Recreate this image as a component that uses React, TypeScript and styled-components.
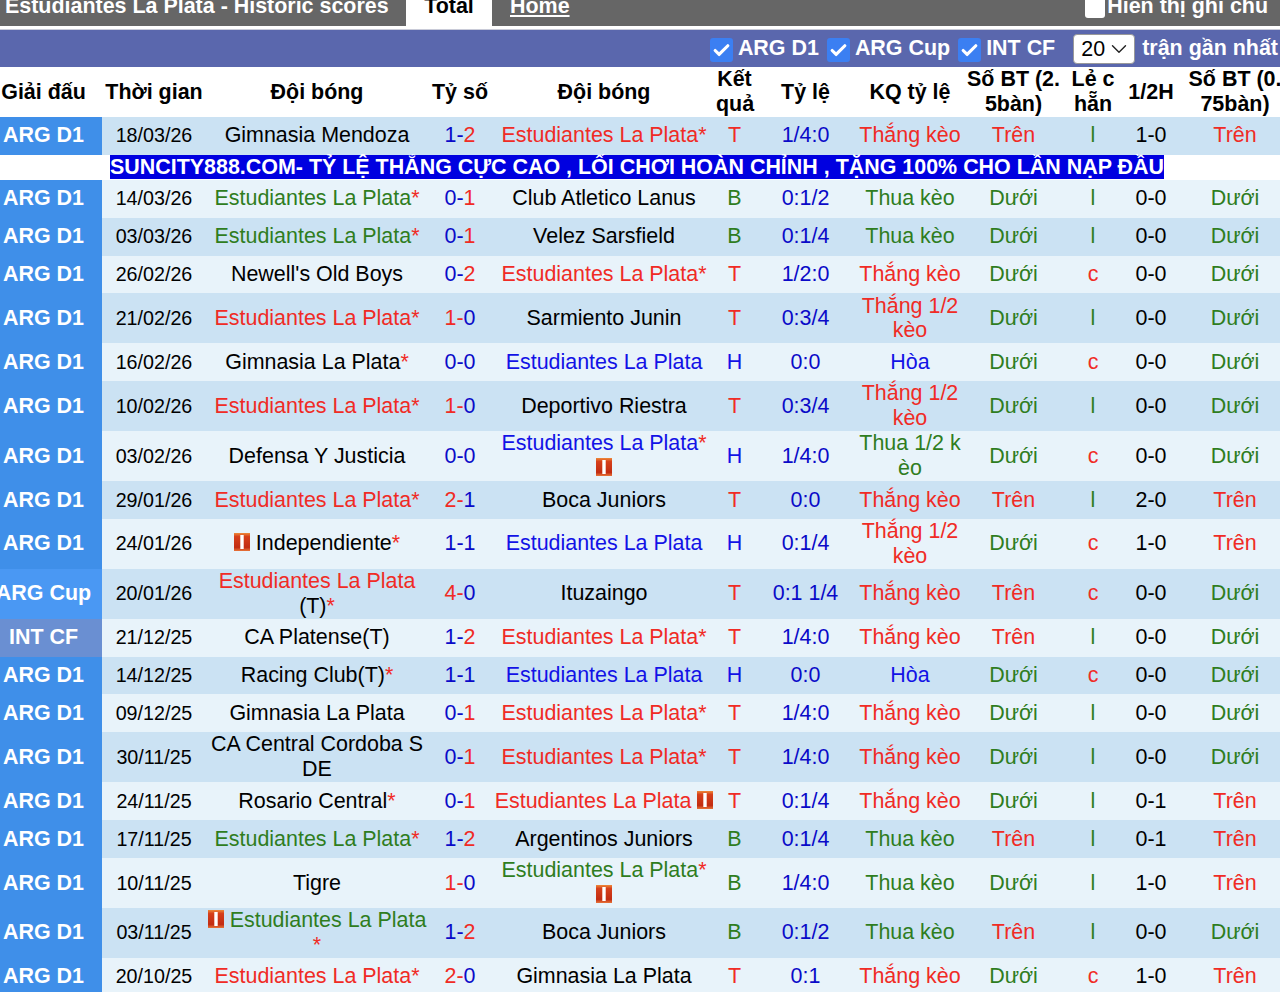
import React from "react";
import styled, { createGlobalStyle } from "styled-components";
import { Check, ChevronDown } from "lucide-react";

const RED = "#f02b25";
const GREEN = "#2f7d1e";
const BLUE = "#1212e6";
const SCORE_BLUE = "#0a0ac8";

const Global = createGlobalStyle`
  html, body { margin: 0; padding: 0; background: #fff; overflow: hidden; }
  body { font-family: "Liberation Sans", Arial, sans-serif; font-size: 21.45px; color: #000; }
`;

const Page = styled.div`
  width: 1280px;
  height: 992px;
  overflow: hidden;
`;

const TitleBar = styled.div`
  height: 26px;
  background: #666;
  display: flex;
  align-items: flex-end;
  padding-left: 5px;
  color: #fff;
  font-weight: 700;
  font-size: 21.45px;
  line-height: 24px;
  overflow: hidden;
`;

const TitleInner = styled.div`
  display: flex;
  width: 100%;
  height: 24px;
  margin-bottom: 8px;
  align-items: center;
`;

const TitleText = styled.span`
  width: 401px;
  flex: none;
`;

const ActiveTab = styled.span`
  width: 86px;
  flex: none;
  background: #fff;
  color: #000;
  text-align: center;
  height: 60px;
  line-height: 60px;
`;

const LinkTab = styled.a`
  margin-left: 18px;
  color: #fff;
  text-decoration: underline;
`;

const NoteToggle = styled.span`
  margin-left: auto;
  margin-right: 12px;
  display: flex;
  align-items: center;
  gap: 2px;
`;

const NoteBox = styled.span`
  width: 20px;
  height: 22px;
  margin-top: 1px;
  background: #fff;
  border-radius: 3px;
`;

const Rule = styled.div`
  height: 4px;
  background: linear-gradient(#fff 0 3px, #c9cbd8 3px);
`;

const FilterBar = styled.div`
  height: 37px;
  background: #5a67ad;
  display: flex;
  align-items: center;
  justify-content: flex-end;
  color: #fff;
  font-weight: 700;
  padding-right: 2px;
`;

const Filter = styled.label`
  display: flex;
  align-items: center;
  gap: 5px;
  margin-right: 8px;
`;

const CheckBox = styled.span`
  width: 23px;
  height: 24px;
  border-radius: 3px;
  background: #3b7ff2;
  display: flex;
  align-items: center;
  justify-content: center;
  margin-top: 3px;
`;

const SelectBox = styled.div`
  width: 62px;
  height: 30px;
  box-sizing: border-box;
  margin: 1px 7px 0 10px;
  background: #fff;
  border: 1px solid #999;
  border-radius: 4px;
  color: #000;
  font-weight: 400;
  display: flex;
  align-items: center;
  justify-content: space-between;
  padding: 0 2px 0 7px;
`;

const Table = styled.table`
  table-layout: fixed;
  width: 1304px;
  margin-left: -15px;
  border-collapse: collapse;
  border-spacing: 0;
  line-height: 24.9px;
  word-break: break-all;
`;

const Th = styled.th`
  height: 50px;
  padding: 0;
  font-weight: 700;
  text-align: center;

  &:nth-child(6) {
    word-break: normal;
  }

  &:last-child {
    padding: 0 3px;
  }
`;

const Tr = styled.tr<{ $dark: boolean; $tall?: boolean }>`
  height: ${(p) => (p.$tall ? "49.9px" : "37.9px")};
  background: ${(p) => (p.$dark ? "#cbe2f3" : "#e8f3fa")};
`;

const Td = styled.td<{ $color?: string }>`
  padding: 0;
  text-align: center;
  color: ${(p) => p.$color ?? "#000"};
`;

const DateCell = styled.td`
  padding: 0;
  text-align: center;
  font-size: 19.7px;
`;

const LeagueCell = styled.td<{ $bg: string }>`
  padding: 0;
  text-align: center;
  white-space: nowrap;
  color: #fff;
  font-weight: 700;
  background: ${(p) => p.$bg};
`;

const BannerRow = styled.tr`
  height: 24.6px;
  background: #fff;
`;

const BannerCell = styled.td`
  padding: 0;
  text-align: center;
  vertical-align: top;
  word-break: normal;
  white-space: nowrap;
`;

const BannerText = styled.span`
  display: inline-block;
  background: #0000e0;
  color: #fff;
  font-weight: 700;
  line-height: 24px;
  height: 24px;
`;

const Team = styled.span<{ $color: string }>`
  color: ${(p) => p.$color};
`;

const Suffix = styled.span`
  color: #000;
`;

const Star = styled.span`
  color: ${RED};
`;

const FlagSvg = styled.svg`
  width: 16px;
  height: 18px;
  vertical-align: -1px;
`;

const Flag = () => (
  <FlagSvg viewBox="0 0 16 18" aria-hidden="true">
    <defs>
      <linearGradient id="flagShade" x1="0" y1="0" x2="0" y2="1">
        <stop offset="0" stopColor="#ee8a3a" />
        <stop offset="0.2" stopColor="#d63f1a" />
        <stop offset="0.8" stopColor="#c22c12" />
        <stop offset="1" stopColor="#e8753a" />
      </linearGradient>
    </defs>
    <rect width="16" height="18" fill="url(#flagShade)" />
    <rect x="6.3" y="2" width="3.4" height="14" fill="#fff" />
  </FlagSvg>
);

type Side = {
  name: string;
  color?: string;
  star?: boolean;
  flag?: "before" | "after";
  suffix?: string;
};

type Row = {
  league: string;
  date: string;
  home: Side;
  score: [number, number];
  away: Side;
  res: "T" | "B" | "H";
  odds: string;
  kq: string;
  bt: "Trên" | "Dưới";
  lc: "l" | "c";
  half: string;
  bt75: "Trên" | "Dưới";
  tall?: boolean;
};

const ELP = "Estudiantes La Plata";
const e = (color: string, extra: Partial<Side> = {}): Side => ({ name: ELP, color, ...extra });
const t = (name: string, extra: Partial<Side> = {}): Side => ({ name, ...extra });

const rows: Row[] = [
  { league: "ARG D1", date: "18/03/26", home: t("Gimnasia Mendoza"), score: [1, 2], away: e(RED, { star: true }), res: "T", odds: "1/4:0", kq: "Thắng kèo", bt: "Trên", lc: "l", half: "1-0", bt75: "Trên" },
  { league: "ARG D1", date: "14/03/26", home: e(GREEN, { star: true }), score: [0, 1], away: t("Club Atletico Lanus"), res: "B", odds: "0:1/2", kq: "Thua kèo", bt: "Dưới", lc: "l", half: "0-0", bt75: "Dưới" },
  { league: "ARG D1", date: "03/03/26", home: e(GREEN, { star: true }), score: [0, 1], away: t("Velez Sarsfield"), res: "B", odds: "0:1/4", kq: "Thua kèo", bt: "Dưới", lc: "l", half: "0-0", bt75: "Dưới" },
  { league: "ARG D1", date: "26/02/26", home: t("Newell's Old Boys"), score: [0, 2], away: e(RED, { star: true }), res: "T", odds: "1/2:0", kq: "Thắng kèo", bt: "Dưới", lc: "c", half: "0-0", bt75: "Dưới" },
  { league: "ARG D1", date: "21/02/26", home: e(RED, { star: true }), score: [1, 0], away: t("Sarmiento Junin"), res: "T", odds: "0:3/4", kq: "Thắng 1/2 kèo", bt: "Dưới", lc: "l", half: "0-0", bt75: "Dưới", tall: true },
  { league: "ARG D1", date: "16/02/26", home: t("Gimnasia La Plata", { star: true }), score: [0, 0], away: e(BLUE), res: "H", odds: "0:0", kq: "Hòa", bt: "Dưới", lc: "c", half: "0-0", bt75: "Dưới" },
  { league: "ARG D1", date: "10/02/26", home: e(RED, { star: true }), score: [1, 0], away: t("Deportivo Riestra"), res: "T", odds: "0:3/4", kq: "Thắng 1/2 kèo", bt: "Dưới", lc: "l", half: "0-0", bt75: "Dưới", tall: true },
  { league: "ARG D1", date: "03/02/26", home: t("Defensa Y Justicia"), score: [0, 0], away: e(BLUE, { star: true, flag: "after" }), res: "H", odds: "1/4:0", kq: "Thua 1/2 kèo", bt: "Dưới", lc: "c", half: "0-0", bt75: "Dưới", tall: true },
  { league: "ARG D1", date: "29/01/26", home: e(RED, { star: true }), score: [2, 1], away: t("Boca Juniors"), res: "T", odds: "0:0", kq: "Thắng kèo", bt: "Trên", lc: "l", half: "2-0", bt75: "Trên" },
  { league: "ARG D1", date: "24/01/26", home: t("Independiente", { star: true, flag: "before" }), score: [1, 1], away: e(BLUE), res: "H", odds: "0:1/4", kq: "Thắng 1/2 kèo", bt: "Dưới", lc: "c", half: "1-0", bt75: "Trên", tall: true },
  { league: "ARG Cup", date: "20/01/26", home: e(RED, { star: true, suffix: " (T)" }), score: [4, 0], away: t("Ituzaingo"), res: "T", odds: "0:1 1/4", kq: "Thắng kèo", bt: "Trên", lc: "c", half: "0-0", bt75: "Dưới", tall: true },
  { league: "INT CF", date: "21/12/25", home: t("CA Platense(T)"), score: [1, 2], away: e(RED, { star: true }), res: "T", odds: "1/4:0", kq: "Thắng kèo", bt: "Trên", lc: "l", half: "0-0", bt75: "Dưới" },
  { league: "ARG D1", date: "14/12/25", home: t("Racing Club(T)", { star: true }), score: [1, 1], away: e(BLUE), res: "H", odds: "0:0", kq: "Hòa", bt: "Dưới", lc: "c", half: "0-0", bt75: "Dưới" },
  { league: "ARG D1", date: "09/12/25", home: t("Gimnasia La Plata"), score: [0, 1], away: e(RED, { star: true }), res: "T", odds: "1/4:0", kq: "Thắng kèo", bt: "Dưới", lc: "l", half: "0-0", bt75: "Dưới" },
  { league: "ARG D1", date: "30/11/25", home: t("CA Central Cordoba S DE"), score: [0, 1], away: e(RED, { star: true }), res: "T", odds: "1/4:0", kq: "Thắng kèo", bt: "Dưới", lc: "l", half: "0-0", bt75: "Dưới", tall: true },
  { league: "ARG D1", date: "24/11/25", home: t("Rosario Central", { star: true }), score: [0, 1], away: e(RED, { flag: "after" }), res: "T", odds: "0:1/4", kq: "Thắng kèo", bt: "Dưới", lc: "l", half: "0-1", bt75: "Trên" },
  { league: "ARG D1", date: "17/11/25", home: e(GREEN, { star: true }), score: [1, 2], away: t("Argentinos Juniors"), res: "B", odds: "0:1/4", kq: "Thua kèo", bt: "Trên", lc: "l", half: "0-1", bt75: "Trên" },
  { league: "ARG D1", date: "10/11/25", home: t("Tigre"), score: [1, 0], away: e(GREEN, { star: true, flag: "after" }), res: "B", odds: "1/4:0", kq: "Thua kèo", bt: "Dưới", lc: "l", half: "1-0", bt75: "Trên", tall: true },
  { league: "ARG D1", date: "03/11/25", home: e(GREEN, { star: true, flag: "before" }), score: [1, 2], away: t("Boca Juniors"), res: "B", odds: "0:1/2", kq: "Thua kèo", bt: "Trên", lc: "l", half: "0-0", bt75: "Dưới", tall: true },
  { league: "ARG D1", date: "20/10/25", home: e(RED, { star: true }), score: [2, 0], away: t("Gimnasia La Plata"), res: "T", odds: "0:1", kq: "Thắng kèo", bt: "Dưới", lc: "c", half: "1-0", bt75: "Trên" },
];

const widths = [117, 104, 222, 64, 224, 37, 105, 104, 103, 56, 60, 108];
const headers = ["Giải đấu", "Thời gian", "Đội bóng", "Tỷ số", "Đội bóng", "Kết quả", "Tỷ lệ", "KQ tỷ lệ", "Số BT (2.5bàn)", "Lẻ c hẵn", "1/2H", "Số BT (0.75bàn)"];

const leagueBg: Record<string, string> = { "ARG D1": "#3f8fe9", "ARG Cup": "#4a98f3", "INT CF": "#6a8fd2" };
const resColor = { T: RED, B: GREEN, H: BLUE };
const kqColor = (k: string) => (k.startsWith("Thắng") ? RED : k.startsWith("Thua") ? GREEN : BLUE);
const btColor = (b: string) => (b === "Trên" ? RED : GREEN);

const TeamCell = ({ side }: { side: Side }) => (
  <Td>
    {side.flag === "before" && <><Flag />{" "}</>}
    <Team $color={side.color ?? "#000"}>{side.name}</Team>
    {side.suffix && <Suffix>{side.suffix}</Suffix>}
    {side.star && <Star>*</Star>}
    {side.flag === "after" && <>{" "}<Flag /></>}
  </Td>
);

const Score = ({ score: [a, b] }: { score: [number, number] }) => (
  <Td>
    <Team $color={a > b ? RED : SCORE_BLUE}>{a}-</Team>
    <Team $color={b > a ? RED : SCORE_BLUE}>{b}</Team>
  </Td>
);

const Filters = ["ARG D1", "ARG Cup", "INT CF"];

export default function App() {
  return (
    <Page>
      <Global />
      <TitleBar>
        <TitleInner>
          <TitleText>Estudiantes La Plata - Historic scores</TitleText>
          <ActiveTab>Total</ActiveTab>
          <LinkTab>Home</LinkTab>
          <NoteToggle>
            <NoteBox />
            Hiển thị ghi chú
          </NoteToggle>
        </TitleInner>
      </TitleBar>
      <Rule />
      <FilterBar>
        {Filters.map((f) => (
          <Filter key={f}>
            <CheckBox><Check size={19} color="#fff" strokeWidth={4} /></CheckBox>
            {f}
          </Filter>
        ))}
        <SelectBox>20<ChevronDown size={26} color="#222" strokeWidth={1.3} /></SelectBox>
        trận gần nhất
      </FilterBar>
      <Table>
        <colgroup>
          {widths.map((w, i) => <col key={i} style={{ width: w }} />)}
        </colgroup>
        <thead>
          <tr>{headers.map((h, i) => <Th key={i}>{h}</Th>)}</tr>
        </thead>
        <tbody>
          {rows.map((r, i) => (
            <React.Fragment key={r.date}>
              <Tr $dark={i % 2 === 0} $tall={r.tall}>
                <LeagueCell $bg={leagueBg[r.league]}>{r.league}</LeagueCell>
                <DateCell>{r.date}</DateCell>
                <TeamCell side={r.home} />
                <Score score={r.score} />
                <TeamCell side={r.away} />
                <Td $color={resColor[r.res]}>{r.res}</Td>
                <Td $color={SCORE_BLUE}>{r.odds}</Td>
                <Td $color={kqColor(r.kq)}>{r.kq}</Td>
                <Td $color={btColor(r.bt)}>{r.bt}</Td>
                <Td $color={r.lc === "c" ? RED : GREEN}>{r.lc}</Td>
                <Td>{r.half}</Td>
                <Td $color={btColor(r.bt75)}>{r.bt75}</Td>
              </Tr>
              {i === 0 && (
                <BannerRow>
                  <BannerCell colSpan={12}>
                    <BannerText>SUNCITY888.COM- TỶ LỆ THẮNG CỰC CAO , LỐI CHƠI HOÀN CHỈNH , TẶNG 100% CHO LẦN NẠP ĐẦU</BannerText>
                  </BannerCell>
                </BannerRow>
              )}
            </React.Fragment>
          ))}
        </tbody>
      </Table>
    </Page>
  );
}
